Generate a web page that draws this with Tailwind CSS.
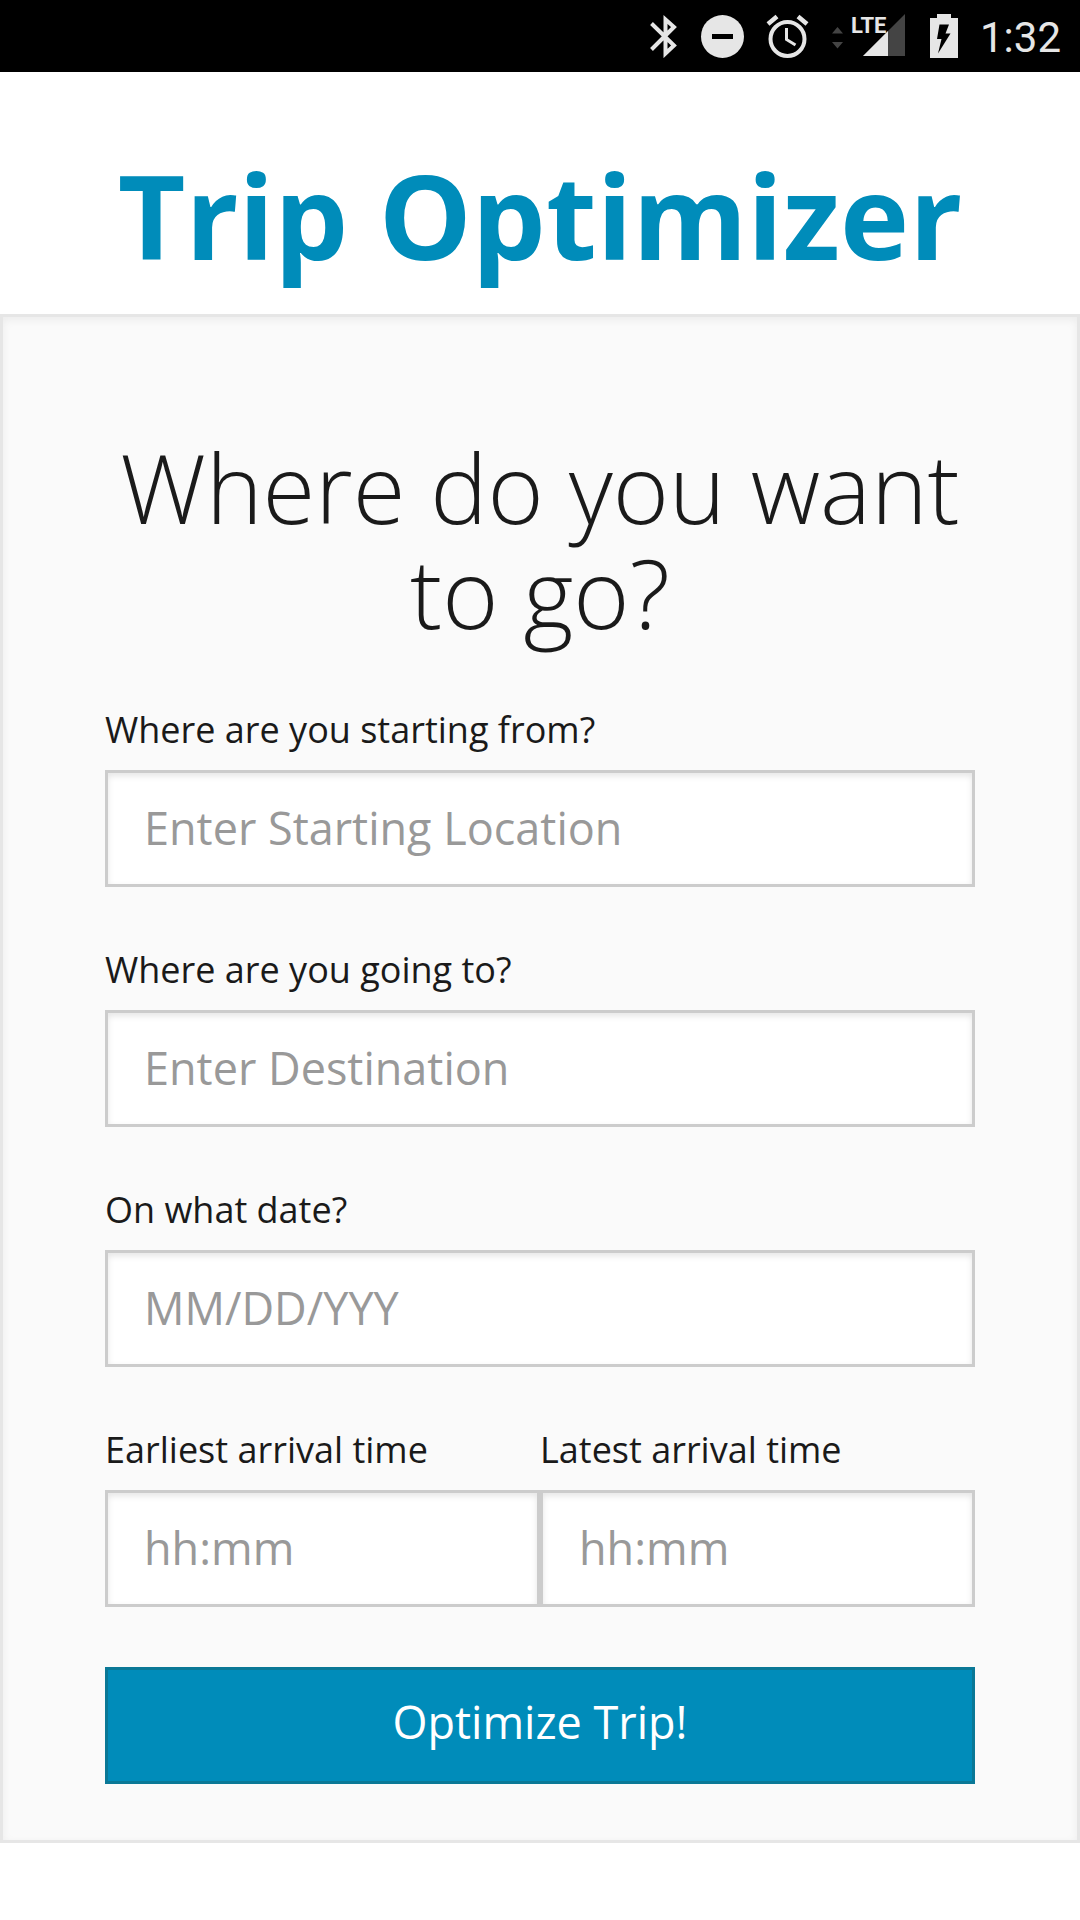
<!DOCTYPE html>
<html lang="en">
<head>
<meta charset="utf-8">
<meta name="viewport" content="width=device-width, initial-scale=1">
<title>Trip Optimizer</title>
<script src="https://cdn.jsdelivr.net/npm/@tailwindcss/browser@4"></script>
</head>
<body class="bg-white font-['Open_Sans',sans-serif] text-[#1a1a1a]">
<header class="flex h-18 items-center justify-end gap-[22px] bg-black pr-[19px] font-['Roboto',sans-serif] text-[#e6e6e6]">
  <svg class="h-11 w-7" viewBox="0 0 28 44" fill="none" stroke="currentColor" stroke-width="4" aria-hidden="true"><path d="M1.5 9.500 24 31.500 15.500 39.500V5.500L24 13 1.500 35.500"/></svg>
  <svg class="size-11" viewBox="0 0 44 44" aria-hidden="true"><circle cx="22.500" cy="22.500" r="21.500" fill="currentColor"/><path d="M12 22.500h21" stroke="#000" stroke-width="5"/></svg>
  <svg class="size-11" viewBox="0 0 44 44" fill="none" stroke="currentColor" stroke-width="4" aria-hidden="true"><circle cx="21.500" cy="25" r="17"/><path d="M20.500 14v11.500l9 5.500" stroke-width="3"/><path d="M2 10l9-7.500M41 10l-9-7.500" stroke-width="4.500"/></svg>
  <svg class="h-11 w-19 overflow-visible" viewBox="0 0 76 44" aria-hidden="true"><path d="M0 19.500l5.500-6.500 5.500 6.500zM0 28h11l-5.500 6.500z" fill="#444"/><path d="M31 42 73 0v42z" fill="#444"/><path d="M31 42 56 17v25z" fill="currentColor"/><text x="19" y="19" font-size="22" font-weight="700" fill="currentColor">LTE</text></svg>
  <svg class="h-11 w-7" viewBox="0 0 28 44" aria-hidden="true"><path d="M0 4h7V0h14v4h7v40H0z" fill="currentColor"/><path d="M9.500 10.500H19L15.500 19.500H20.500L8 39.500 11.500 25H7z"/></svg>
  <time class="pt-1 text-[42px] leading-none">1:32</time>
</header>
<main>
<h1 class="pt-[78px] pb-[34px] text-center text-[117px] leading-[130px] font-bold text-[#008cba]">Trip Optimizer</h1>
<form class="border-3 border-[#e6e6e6] bg-[#fafafa] px-[102px] pt-[117px] pb-14 inset-shadow-[0_3px_8px_rgba(0,0,0,0.06)]">
  <h2 class="mb-[58px] text-center text-[96px] leading-[105px] font-light">Where do you want to go?</h2>
  <label for="from" class="mb-[13px] block text-[36px] leading-[55px]">Where are you starting from?</label>
  <input id="from" type="text" class="mb-[55px] block h-[117px] w-full border-3 border-[#cccccc] bg-white px-9 pb-0.5 text-[45px] inset-shadow-[0_3px_6px_rgba(0,0,0,0.1)] placeholder:text-[#999999]" placeholder="Enter Starting Location">
  <label for="to" class="mb-[13px] block text-[36px] leading-[55px]">Where are you going to?</label>
  <input id="to" type="text" class="mb-[55px] block h-[117px] w-full border-3 border-[#cccccc] bg-white px-9 pb-0.5 text-[45px] inset-shadow-[0_3px_6px_rgba(0,0,0,0.1)] placeholder:text-[#999999]" placeholder="Enter Destination">
  <label for="date" class="mb-[13px] block text-[36px] leading-[55px]">On what date?</label>
  <input id="date" type="text" class="mb-[55px] block h-[117px] w-full border-3 border-[#cccccc] bg-white px-9 pb-0.5 text-[45px] inset-shadow-[0_3px_6px_rgba(0,0,0,0.1)] placeholder:text-[#999999]" placeholder="MM/DD/YYY">
  <div class="mb-15 grid grid-cols-2">
    <div>
      <label for="earliest" class="mb-[13px] block text-[36px] leading-[55px]">Earliest arrival time</label>
      <input id="earliest" type="text" class="block h-[117px] w-full border-3 border-[#cccccc] bg-white px-9 pb-0.5 text-[45px] inset-shadow-[0_3px_6px_rgba(0,0,0,0.1)] placeholder:text-[#999999]" placeholder="hh:mm">
    </div>
    <div>
      <label for="latest" class="mb-[13px] block text-[36px] leading-[55px]">Latest arrival time</label>
      <input id="latest" type="text" class="block h-[117px] w-full border-3 border-[#cccccc] bg-white px-9 pb-0.5 text-[45px] inset-shadow-[0_3px_6px_rgba(0,0,0,0.1)] placeholder:text-[#999999]" placeholder="hh:mm">
    </div>
  </div>
  <button type="submit" class="block h-[117px] w-full border-3 border-[#0a7896] bg-[#008cba] pb-2 text-center text-[45px] text-white">Optimize Trip!</button>
</form>
</main>
</body>
</html>
